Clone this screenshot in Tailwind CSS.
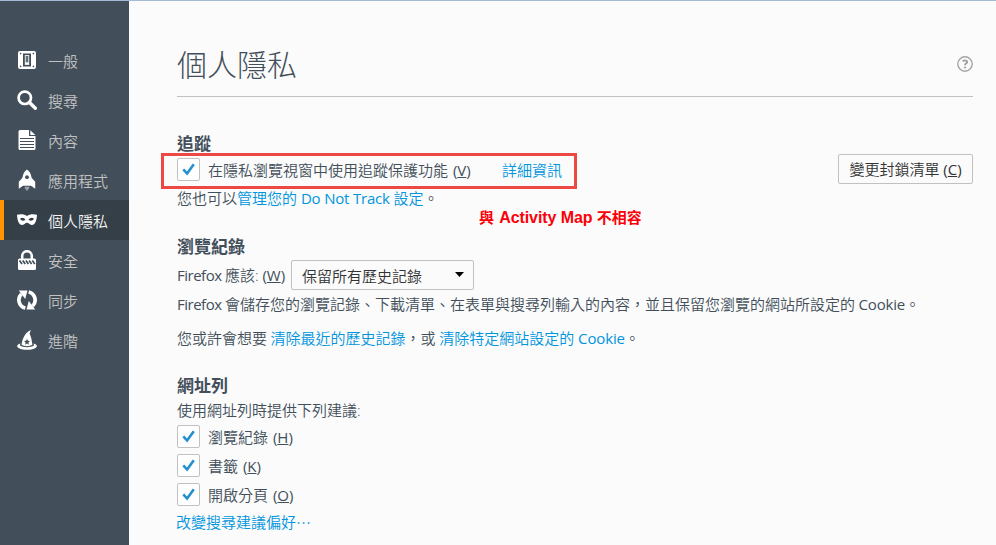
<!DOCTYPE html>
<html lang="zh-TW">
<head>
<meta charset="utf-8">
<title>個人隱私</title>
<script src="https://cdn.jsdelivr.net/npm/@tailwindcss/browser@4"></script>
</head>
<body class="relative flex h-[545px] w-[996px] overflow-hidden border-t border-[#a3bbd6] bg-[#fbfbfb] font-['Open_Sans','Noto_Sans_CJK_TC',sans-serif] text-[15px] leading-none font-[350] text-[#424f5a]">
<svg class="hidden"><symbol id="check" viewBox="0 0 23 23"><path d="M6.300 11.300l3.800 4.200L16.800 6.300" fill="none" stroke="#2490d0" stroke-width="2.600"/></symbol></svg>

<nav class="h-full w-[129px] shrink-0 bg-[#424f5a] pt-[39px] text-[#c1c1c1]">
  <a class="flex h-10 items-center gap-[11px] pl-[17px]">
    <svg class="size-5" viewBox="0 0 20 20"><rect x="1" y="1" width="18" height="18" rx="2" fill="#fff"/><path d="M6 3.500h8v13H6z" fill="#424f5a"/><path d="M7.800 5h4.400v10H7.800z" fill="#e4e6e7"/><path d="M8.800 6h2.400v6.500H8.800z" fill="#626d76"/><path d="M8.500 12.500h3V14h-3z" fill="#fff"/><g fill="#424f5a"><circle cx="3.600" cy="3.600" r=".8"/><circle cx="16.400" cy="3.600" r=".8"/><circle cx="3.600" cy="16.400" r=".8"/><circle cx="16.400" cy="16.400" r=".8"/></g></svg>
    <span class="pt-0.5">一般</span></a>
  <a class="flex h-10 items-center gap-[11px] pl-[17px]">
    <svg class="size-5" viewBox="0 0 20 20" fill="none" stroke="#fff"><circle cx="7.800" cy="7.800" r="6.200" stroke-width="2.700"/><path d="M12.500 12.500l5.800 5.800" stroke-width="3.400" stroke-linecap="round"/></svg>
    <span class="pt-0.5">搜尋</span></a>
  <a class="flex h-10 items-center gap-[11px] pl-[17px]">
    <svg class="size-5" viewBox="0 0 20 20"><path d="M3 0h9v6h6.500v12.500q0 1.500-1.500 1.500H3q-1.500 0-1.500-1.500v-17Q1.500 0 3 0z" fill="#fff"/><path d="M13.300.3l5 4.700h-5z" fill="#fff"/><path d="M3 8.500h14M3 11.500h14M3 14.500h14M3 17.500h14" stroke="#424f5a" stroke-width="1.100"/></svg>
    <span class="pt-0.5">內容</span></a>
  <a class="flex h-10 items-center gap-[11px] pl-[17px]">
    <svg class="size-5 overflow-visible" viewBox="0 0 20 20"><path d="M10-.5C7.500 1 6 4 5.300 8L1.800 11.800v7L6 15.800h8l4.200 3v-7L14.700 8C14 4 12.500 1 10-.5z" fill="#fff"/><circle cx="10" cy="7.200" r="1.900" fill="#424f5a"/><path d="M7.300 16.800h5.400L11.700 19 10 21 8.300 19z" fill="#9ba1a6"/></svg>
    <span class="pt-0.5">應用程式</span></a>
  <a class="flex h-10 items-center gap-[11px] border-l-4 border-[#ff9500] bg-[#343f48] pl-[13px] text-[#f2f2f2]">
    <svg class="size-5" viewBox="0 0 20 20"><path d="M0 4.700C3.500 3.800 7.500 4 10 5.900 12.500 4 16.500 3.800 20 4.700c-.3 5-1.500 10.300-5.300 10.300-2.200 0-3-2.200-4.700-2.200S7.500 15 5.300 15C1.500 15 .3 9.700 0 4.700z" fill="#fff"/><path d="M3 8.800c1.800-1.800 4.300-1 5.400 1-1.700 1.400-4.100 1.200-5.400-1zM17 8.800c-1.800-1.800-4.300-1-5.400 1 1.700 1.400 4.100 1.200 5.400-1z" fill="#343f48"/></svg>
    <span class="pt-0.5">個人隱私</span></a>
  <a class="flex h-10 items-center gap-[11px] pl-[17px]">
    <svg class="size-5" viewBox="0 0 20 20"><path d="M5.200 9.500V6a4.800 4.800 0 0 1 9.600 0v3.500" fill="none" stroke="#fff" stroke-width="2.500"/><rect x="1" y="8.500" width="18" height="11.500" rx="1.500" fill="#fff"/><path d="M2.500 10.500l2.500 3.500M5.700 10.500l2.500 3.500M8.900 10.500l2.500 3.500M12.100 10.500l2.500 3.500M15.300 10.500l2.500 3.500" stroke="#424f5a" stroke-width="1.700"/></svg>
    <span class="pt-0.5">安全</span></a>
  <a class="flex h-10 items-center gap-[11px] pl-[17px]">
    <svg class="size-5" viewBox="0 0 20 20"><g id="arc"><path d="M8.300 18A8.300 8.300 0 0 1 4.400 4" fill="none" stroke="#fff" stroke-width="3.700"/><path d="M1.800.5h8.700L8.200 9z" fill="#fff"/></g><use href="#arc" transform="rotate(180 10 10)"/></svg>
    <span class="pt-0.5">同步</span></a>
  <a class="flex h-10 items-center gap-[11px] pl-[17px]">
    <svg class="size-5" viewBox="0 0 20 20"><path d="M13.800 0l-1.200 3.800c1.600 3.200 2.400 7.200 2.800 11-2.500 1.900-8.300 1.900-10.800 0C5.300 9 7.500 3.200 13.800 0z" fill="#fff"/><path d="M10 8.800l.9 2 2.100.2-1.600 1.500.5 2.200-1.900-1.100-1.900 1.100.5-2.200L7 11l2.100-.2z" fill="#424f5a"/><path d="M3.300 13.500C-.5 14.500-.8 17 2 18.300c4 2 12 2 16 0 2.800-1.300 2.500-3.800-1.300-4.800l.3 2c-3 2.300-11 2.300-14 0z" fill="#fff"/></svg>
    <span class="pt-0.5">進階</span></a>
</nav>

<main class="flex grow flex-col pr-[23px] pl-12">
  <header class="flex h-24 shrink-0 items-center justify-between border-b border-[#c1c1c1] pt-[31px]">
    <h1 class="pt-0.5 text-[30px] font-light">個人隱私</h1>
    <svg class="size-4" viewBox="0 0 16 16"><circle cx="8" cy="8" r="7.200" fill="none" stroke="#a5a5a5" stroke-width="1.400"/><path d="M5.700 5.300q2-1.500 3.900-.5 1.300 1.500-.6 2.700Q8 8.200 8 9.300" fill="none" stroke="#a0a0a0" stroke-width="1.900"/><circle cx="8" cy="11.500" r="1.100" fill="#a0a0a0"/></svg>
  </header>

  <section class="mt-[34px]">
    <h2 class="flex h-6 items-center text-[17px] font-bold">追蹤</h2>
    <div class="mt-px flex h-7 items-center">
      <span class="-mt-px size-[23px] rounded-xs border border-[#c1c1c1] bg-white"><svg class="-m-px size-[23px]"><use href="#check"/></svg></span>
      <span class="ml-2 w-[264px] whitespace-pre">在隱私瀏覽視窗中使用追蹤保護功能 <span class="pl-px font-normal">(<u>V</u>)</span></span>
      <a class="ml-[30px] text-[#0095dd]">詳細資訊</a>
      <button class="mt-[-3px] ml-auto flex h-[30px] w-[135px] items-center justify-center rounded-xs border border-[#c1c1c1] pt-0.5 whitespace-pre text-[#333]">變更封鎖清單 <span class="font-normal">(<u>C</u>)</span></button>
    </div>
    <p class="flex h-7 items-center whitespace-pre">您也可以<a class="text-[#0095dd]">管理您的 <span class="font-normal tracking-[-0.2px]">Do Not Track </span>設定</a>。</p>
  </section>

  <section class="mt-[21px]">
    <h2 class="flex h-[26px] items-center text-[17px] font-bold">瀏覽紀錄</h2>
    <div class="mt-px flex h-[30px] items-center">
      <span class="w-[114px] whitespace-pre"><span class="font-normal tracking-[-0.5px]">Firefox </span>應該: <span class="font-normal">(<u>W</u>)</span></span>
      <div class="flex h-[30px] w-[183px] items-center justify-between rounded-xs border border-[#c1c1c1] pr-[9px] pl-2.5 text-[#333]"><span class="pt-0.5">保留所有歷史記錄</span><svg class="mb-0.5 h-[5px] w-[9px]" viewBox="0 0 9 5"><path d="M0 0h9L4.500 5z" fill="#000"/></svg></div>
    </div>
    <p class="flex h-7 items-center whitespace-pre"><span class="font-normal tracking-[-0.5px]">Firefox </span>會儲存您的瀏覽記錄、下載清單、在表單與搜尋列輸入的內容，並且保留您瀏覽的網站所設定的<span class="font-normal tracking-[-0.2px]"> Cookie</span>。</p>
    <p class="mt-[5px] flex h-[30px] items-center whitespace-pre">您或許會想要<span class="tracking-[-0.5px]"> </span><a class="text-[#0095dd]">清除最近的歷史記錄</a>，或 <a class="text-[#0095dd]">清除特定網站設定的<span class="font-normal tracking-[-0.15px]"> Cookie</span></a>。</p>
  </section>

  <section class="mt-5">
    <h2 class="flex h-6 items-center text-[17px] font-bold">網址列</h2>
    <p class="flex h-[26px] items-center">使用網址列時提供下列建議:</p>
    <div class="flex h-[29px] items-center gap-2">
      <span class="-mt-[3px] size-[23px] rounded-xs border border-[#c1c1c1] bg-white"><svg class="-m-px size-[23px]"><use href="#check"/></svg></span>
      <span class="whitespace-pre">瀏覽紀錄 <span class="pl-px font-normal">(<u>H</u>)</span></span>
    </div>
    <div class="flex h-[29px] items-center gap-2">
      <span class="-mt-[3px] size-[23px] rounded-xs border border-[#c1c1c1] bg-white"><svg class="-m-px size-[23px]"><use href="#check"/></svg></span>
      <span class="whitespace-pre">書籤 <span class="pl-px font-normal">(<u>K</u>)</span></span>
    </div>
    <div class="flex h-[29px] items-center gap-2">
      <span class="-mt-[3px] size-[23px] rounded-xs border border-[#c1c1c1] bg-white"><svg class="-m-px size-[23px]"><use href="#check"/></svg></span>
      <span class="whitespace-pre">開啟分頁 <span class="pl-px font-normal">(<u>O</u>)</span></span>
    </div>
    <a class="-ml-px flex h-6 items-center text-[#0095dd]">改變搜尋建議偏好<span class="font-['Noto_Sans_CJK_TC',sans-serif]">⋯</span></a>
  </section>
</main>

<div class="absolute top-[152px] left-[161px] h-[36px] w-[416px] border-3 border-[#ec4844]"></div>
<p class="absolute top-[209px] left-[479px] font-['Liberation_Sans','Noto_Sans_CJK_TC',sans-serif] text-[15px] font-bold whitespace-pre text-[#fb0007]">與 <span class="pl-px text-[16px] tracking-[-0.08px]">Activity Map</span> 不相容</p>
</body>
</html>
